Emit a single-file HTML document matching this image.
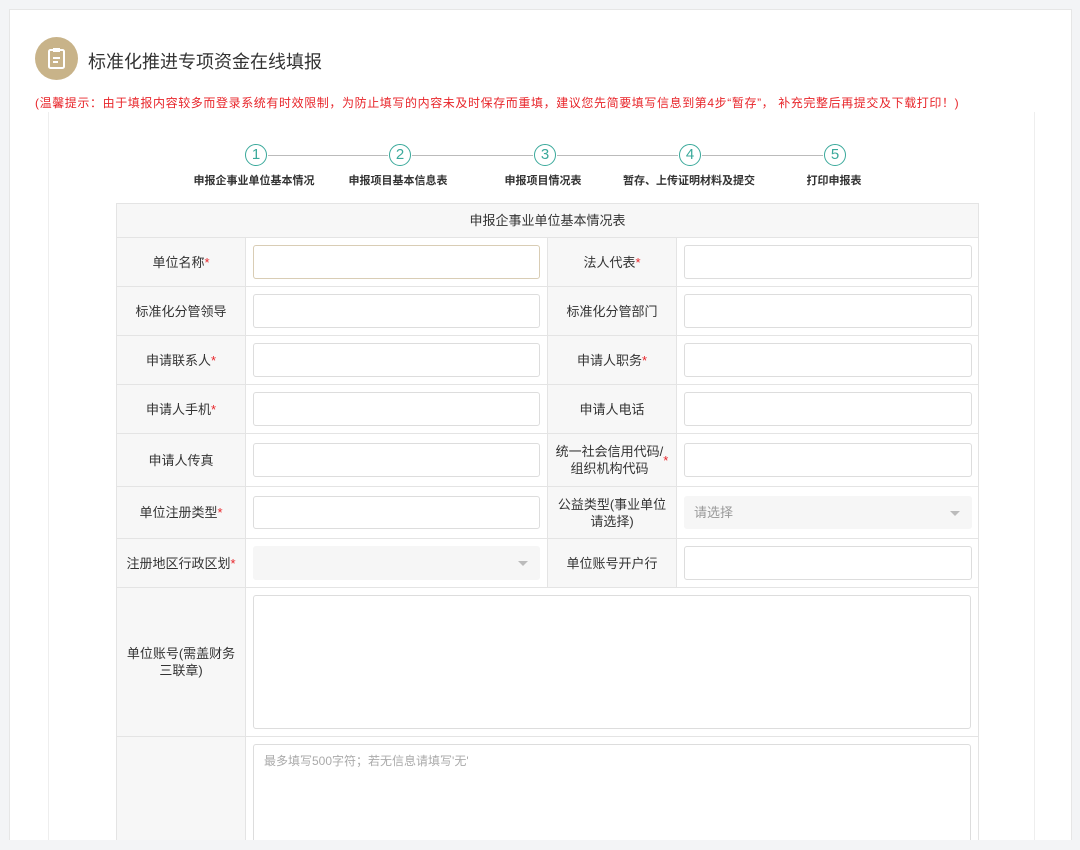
<!DOCTYPE html>
<html><head><meta charset="utf-8"><style>
*{box-sizing:border-box;margin:0;padding:0}
html{width:1080px;height:850px;overflow:hidden}
body{width:1080px;height:850px;background:#f3f4f6;font-family:"Liberation Sans","Noto Sans CJK SC",sans-serif;color:#333;position:relative;overflow:hidden}
.card{position:absolute;left:9px;top:9px;width:1063px;height:831px;background:#fff;border:1px solid #e6e6e6;border-bottom:none}
.inner{position:absolute;left:48px;top:112px;width:987px;height:728px;border-left:1px solid #eee;border-right:1px solid #eee}
.ic{position:absolute;left:35px;top:37px;width:43px;height:43px;border-radius:50%;background:#c8b389}
.title{position:absolute;left:88px;top:48px;font-size:18px;color:#333}
.tip{position:absolute;left:35px;top:94px;font-size:12px;color:#e8252a;white-space:nowrap;letter-spacing:0.6px}
.step{position:absolute;top:144px;width:22px;height:22px;border:1.5px solid #3aa99b;border-radius:50%;color:#3aa99b;font-size:15px;text-align:center;line-height:19px;background:#fff}
.sl{position:absolute;top:155px;height:1px;background:#bbb}
.st{position:absolute;top:172px;font-size:11px;color:#333;font-weight:bold;white-space:nowrap;transform:translateX(-50%)}
.tb{position:absolute;left:116px;top:203px;width:863px;height:637px;border:1px solid #e4e4e4;border-bottom:none;overflow:hidden}
.row{position:absolute;left:0;width:861px;border-top:1px solid #e4e4e4}
.c{position:absolute;top:0;bottom:0;display:flex;align-items:center;justify-content:center;text-align:center;font-size:13px;line-height:17px}
.l1{left:0;width:129px;background:#f7f7f7;border-right:1px solid #e4e4e4}
.i1{left:129px;width:302px;border-right:1px solid #e4e4e4}
.l2{left:431px;width:129px;background:#f7f7f7;border-right:1px solid #e4e4e4}
.i2{left:560px;width:302px}
.in{position:absolute;left:7px;right:7px;top:7px;bottom:7px;border:1px solid #ddd;border-radius:3px;background:#fff}
.sel{border:none;background:#f6f6f6;color:#999;font-size:13px;text-align:left;padding-left:10px;display:flex;align-items:center}
.sel:after{content:"";position:absolute;right:12px;top:50%;margin-top:-2px;border:5px solid transparent;border-top:5px solid #bbb;border-bottom:none}
.r{color:#e8252a}
</style></head><body>
<div class="card"></div>
<div class="inner"></div>
<div class="ic"><svg width="43" height="43" viewBox="0 0 43 43"><rect x="14" y="13" width="15" height="18" rx="1.5" fill="none" stroke="#fff" stroke-width="2"/><rect x="18" y="11" width="7" height="4" fill="#fff"/><line x1="18" y1="21" x2="25" y2="21" stroke="#fff" stroke-width="2"/><line x1="18" y1="25" x2="23" y2="25" stroke="#fff" stroke-width="2"/></svg></div>
<div class="title">标准化推进专项资金在线填报</div>
<div class="tip">(温馨提示：由于填报内容较多而登录系统有时效限制，为防止填写的内容未及时保存而重填，建议您先简要填写信息到第4步“暂存”， 补充完整后再提交及下载打印！)</div>
<div class="sl" style="left:268px;width:120px"></div>
<div class="sl" style="left:412px;width:121px"></div>
<div class="sl" style="left:557px;width:121px"></div>
<div class="sl" style="left:702px;width:121px"></div>
<div class="step" style="left:245px">1</div>
<div class="step" style="left:389px">2</div>
<div class="step" style="left:534px">3</div>
<div class="step" style="left:679px">4</div>
<div class="step" style="left:824px">5</div>
<div class="st" style="left:254px">申报企事业单位基本情况</div>
<div class="st" style="left:398px">申报项目基本信息表</div>
<div class="st" style="left:543px">申报项目情况表</div>
<div class="st" style="left:689px">暂存、上传证明材料及提交</div>
<div class="st" style="left:834px">打印申报表</div>
<div class="tb">
<div class="row" style="top:-1px;height:35px;border-top:none;background:#f7f7f7"><div class="c" style="left:0;right:0;font-size:13px">申报企事业单位基本情况表</div></div>
<div class="row" style="top:33px;height:49px"><div class="c l1">单位名称<span class="r">*</span></div><div class="c i1"><div class="in" style="border-color:#d9cdb5"></div></div><div class="c l2">法人代表<span class="r">*</span></div><div class="c i2"><div class="in"></div></div></div>
<div class="row" style="top:82px;height:49px"><div class="c l1">标准化分管领导</div><div class="c i1"><div class="in"></div></div><div class="c l2">标准化分管部门</div><div class="c i2"><div class="in"></div></div></div>
<div class="row" style="top:131px;height:49px"><div class="c l1">申请联系人<span class="r">*</span></div><div class="c i1"><div class="in"></div></div><div class="c l2">申请人职务<span class="r">*</span></div><div class="c i2"><div class="in"></div></div></div>
<div class="row" style="top:180px;height:49px"><div class="c l1">申请人手机<span class="r">*</span></div><div class="c i1"><div class="in"></div></div><div class="c l2">申请人电话</div><div class="c i2"><div class="in"></div></div></div>
<div class="row" style="top:229px;height:53px"><div class="c l1">申请人传真</div><div class="c i1"><div class="in" style="top:9px;bottom:9px"></div></div><div class="c l2">统一社会信用代码/<br>组织机构代码<span class="r">*</span></div><div class="c i2"><div class="in" style="top:9px;bottom:9px"></div></div></div>
<div class="row" style="top:282px;height:52px"><div class="c l1">单位注册类型<span class="r">*</span></div><div class="c i1"><div class="in" style="top:9px;bottom:9px"></div></div><div class="c l2">公益类型(事业单位<br>请选择)</div><div class="c i2"><div class="in sel" style="top:9px;bottom:9px">请选择</div></div></div>
<div class="row" style="top:334px;height:49px"><div class="c l1">注册地区行政区划<span class="r">*</span></div><div class="c i1"><div class="in sel"></div></div><div class="c l2">单位账号开户行</div><div class="c i2"><div class="in"></div></div></div>
<div class="row" style="top:383px;height:149px"><div class="c l1">单位账号(需盖财务<br>三联章)</div><div class="c" style="left:129px;right:0"><div class="in"></div></div></div>
<div class="row" style="top:532px;height:130px"><div class="c l1"></div><div class="c" style="left:129px;right:0"><div class="in" style="bottom:-10px;text-align:left;font-size:12px;color:#aaa;padding:8px 10px">最多填写500字符；若无信息请填写'无'</div></div></div>
</div>
</body></html>
